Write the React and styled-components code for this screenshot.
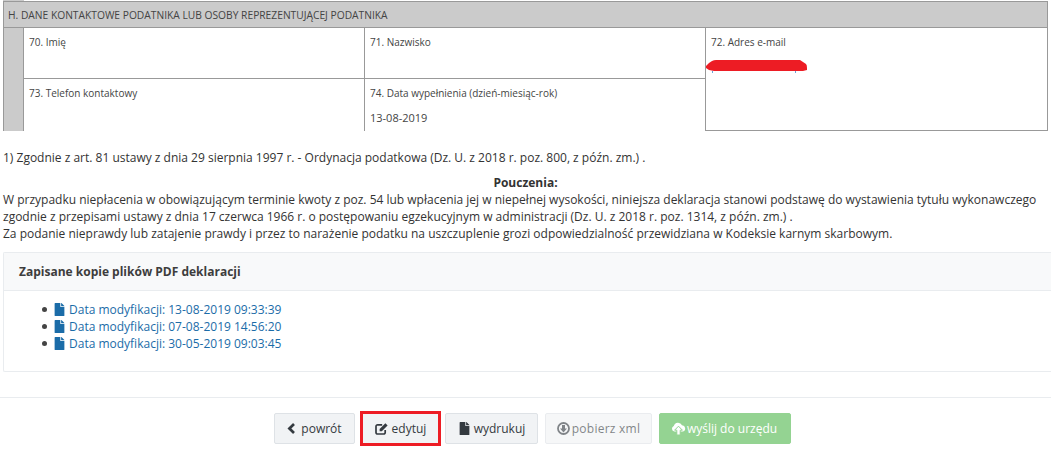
import React from 'react'
import styled, { createGlobalStyle } from 'styled-components'
import { FaFile } from 'react-icons/fa'

const Global = createGlobalStyle`
  html, body { margin: 0; padding: 0; background: #fff; overflow: hidden; }
  body {
    font-family: "Open Sans", "Liberation Sans", sans-serif;
    font-size: 12px;
    line-height: 17px;
    color: #333;
  }
`
const Page = styled.div`
  width: 1051px;
  height: 452px;
  overflow: hidden;
`
const Stub = styled.div`
  margin-left: 3px;
  width: 21px;
  height: 1px;
  background: #cbcbcb;
`
const Form = styled.div`
  margin-left: 3px;
  width: 1045px;
  height: 130px;
  box-sizing: border-box;
  border-top: 1px solid #999;
  border-left: 1px solid #999;
  border-right: 1px solid #999;
  background: #cbcbcb;
  display: flex;
  flex-direction: column;
`
const SectionTitle = styled.div`
  height: 25px;
  padding-left: 4px;
  font-size: 10.26px;
  line-height: 26px;
  color: #444;
  border-bottom: 1px solid #999;
`
const CellGrid = styled.div`
  flex: 1;
  margin-left: 19px;
  display: grid;
  grid-template-columns: 341px 341px 1fr;
  grid-template-rows: 50px 1fr;
  background: #fff;
`
const Cell = styled.div`
  position: relative;
  padding: 7px 5px 0 5px;
  box-sizing: border-box;
  border-left: 1px solid #999;
  border-top: ${p => (p.$second ? '1px solid #999' : 'none')};
  border-bottom: ${p => (p.$closed ? '1px solid #999' : 'none')};
  font-size: 10px;
  line-height: 15px;
  color: #444;
  grid-column: ${p => p.$col || 'auto'};
  grid-row: ${p => p.$row || 'auto'};
`
const CellValue = styled.div`
  margin-top: 9px;
  font-size: 11px;
  color: #444;
`
const Scribble = styled.svg`
  position: absolute;
  left: 0;
  top: 32px;
`
const Note = styled.p`
  margin: 18px 0 0 3px;
`
const Lesson = styled.section`
  margin: 8px 0 0 3px;
`
const LessonTitle = styled.div`
  text-align: center;
  font-weight: 700;
  width: 1045px;
`
const Panel = styled.section`
  margin: 10px 0 0 3px;
  height: 120px;
  box-sizing: border-box;
  border: 1px solid #e9ecef;
  border-right: none;
  border-radius: 2px 0 0 2px;
`
const PanelHead = styled.h3`
  margin: 0;
  height: 38px;
  box-sizing: border-box;
  padding-left: 15px;
  background: #f8f9fa;
  border-bottom: 1px solid #e9ecef;
  font-size: 12px;
  font-weight: 700;
  line-height: 37px;
  color: #3d3d3d;
`
const FileList = styled.ul`
  margin: 10px 0 0;
  padding: 0 0 0 38px;
  list-style: none;
`
const FileLink = styled.li`
  display: flex;
  align-items: center;
  &::before {
    content: '';
    width: 5px;
    height: 5px;
    border-radius: 50%;
    background: #444;
    margin-right: 6px;
  }
  a {
    color: #1b6ca8;
    text-decoration: none;
    display: flex;
    align-items: center;
    gap: 3px;
  }
`
const Rule = styled.hr`
  margin: 25px 0 0;
  border: none;
  border-top: 1px solid #e9ecef;
`
const Actions = styled.div`
  margin: 15px 0 0 274px;
  display: flex;
  gap: 7px;
`
const Button = styled.button`
  height: 31px;
  width: ${p => p.$w}px;
  padding: 0 ${p => (p.$send ? '2px' : '0')} 0 0;
  box-sizing: border-box;
  border: 1px solid ${p => (p.$send ? '#94d392' : '#dee2e6')};
  border-radius: ${p => (p.$marked ? '0' : '2px')};
  background: ${p => (p.$send ? '#94d392' : '#f1f3f5')};
  color: ${p => (p.$send ? '#fff' : '#343a40')};
  font-family: inherit;
  font-size: 12px;
  display: flex;
  align-items: center;
  justify-content: center;
  gap: ${p => p.$gap ?? 4}px;
  letter-spacing: ${p => (p.$off ? '0.25px' : '0')};
  opacity: ${p => (p.$off ? 0.62 : 1)};
  outline: ${p => (p.$marked ? '3px solid #ed1c24' : 'none')};
  outline-offset: -1px;
  margin-right: ${p => (p.$marked ? '-1px' : '0')};
`
const files = ['13-08-2019 09:33:39', '07-08-2019 14:56:20', '30-05-2019 09:03:45']

const ChevronIcon = () => (
  <svg width="9" height="11" viewBox="0 0 9 11">
    <path d="M7 1 L2.4 5.5 L7 10" fill="none" stroke="currentColor" strokeWidth="2.7" />
  </svg>
)
const EditIcon = () => (
  <svg width="13" height="13" viewBox="0 0 13 13">
    <path
      d="M10.2 8v2.4a1.6 1.6 0 0 1-1.6 1.6H2.6A1.6 1.6 0 0 1 1 10.4V4.4a1.6 1.6 0 0 1 1.6-1.6h4.6"
      fill="none"
      stroke="currentColor"
      strokeWidth="1.7"
    />
    <path d="M4.6 7 L4.6 9.2 L6.8 9.2 L12.6 3.4 L10.4 1.2 Z" fill="currentColor" />
  </svg>
)
const CircleDownIcon = () => (
  <svg width="13" height="13" viewBox="0 0 13 13">
    <circle cx="6.5" cy="6.5" r="5.5" fill="none" stroke="currentColor" strokeWidth="1.8" />
    <path d="M5 3h3v3.4h2L6.5 10.4 3 6.4h2z" fill="currentColor" />
  </svg>
)
const CloudIcon = () => (
  <svg width="15" height="13" viewBox="0 0 15 13">
    <path
      d="M3.4 9.6A3 3 0 0 1 2.8 3.9 4.4 4.4 0 0 1 11 3.2 3.3 3.3 0 0 1 12 9.6Z"
      fill="#fff"
    />
    <path d="M7.5 4.2 L3.6 8.2 H5.8 V13 H9.2 V8.2 H11.4 Z" fill="#fff" stroke="#94d392" strokeWidth="1" />
  </svg>
)

export default function App() {
  return (
    <Page>
      <Global />
      <Stub />
      <Form>
        <SectionTitle>H. DANE KONTAKTOWE PODATNIKA LUB OSOBY REPREZENTUJĄCEJ PODATNIKA</SectionTitle>
        <CellGrid>
          <Cell>70. Imię</Cell>
          <Cell>71. Nazwisko</Cell>
          <Cell $col="3" $row="1 / span 2" $closed>
            72. Adres e-mail
            <Scribble width="101" height="13" viewBox="0 0 101 13">
              <path d="M6 11h1v2H6zM89 11h1v2h-1z" fill="#6a9fd8" />
              <path d="M0 6 L3 3 L6 1 Q8 0 10 0 H94 L97 2 L100 4 Q101 5 101 8 V10 L97 11 H8 L3 10 L0 8Z" fill="#ed1c24" />
            </Scribble>
          </Cell>
          <Cell $second>73. Telefon kontaktowy</Cell>
          <Cell $second>
            74. Data wypełnienia (dzień-miesiąc-rok)
            <CellValue>13-08-2019</CellValue>
          </Cell>
        </CellGrid>
      </Form>
      <Note>1) Zgodnie z art. 81 ustawy z dnia 29 sierpnia 1997 r. - Ordynacja podatkowa (Dz. U. z 2018 r. poz. 800, z późn. zm.) .</Note>
      <Lesson>
        <LessonTitle>Pouczenia:</LessonTitle>
        W przypadku niepłacenia w obowiązującym terminie kwoty z poz. 54 lub wpłacenia jej w niepełnej wysokości, niniejsza deklaracja stanowi podstawę do wystawienia tytułu wykonawczego<br />
        zgodnie z przepisami ustawy z dnia 17 czerwca 1966 r. o postępowaniu egzekucyjnym w administracji (Dz. U. z 2018 r. poz. 1314, z późn. zm.) .<br />
        Za podanie nieprawdy lub zatajenie prawdy i przez to narażenie podatku na uszczuplenie grozi odpowiedzialność przewidziana w Kodeksie karnym skarbowym.
      </Lesson>
      <Panel>
        <PanelHead>Zapisane kopie plików PDF deklaracji</PanelHead>
        <FileList>
          {files.map(f => (
            <FileLink key={f}>
              <a href="#">
                <FaFile size={13} />
                Data modyfikacji: {f}
              </a>
            </FileLink>
          ))}
        </FileList>
      </Panel>
      <Rule />
      <Actions>
        <Button $w={81} $gap={5}><ChevronIcon /> powrót</Button>
        <Button $w={77} $marked><EditIcon /> edytuj</Button>
        <Button $w={93} $gap={3}><FaFile size={13} /> wydrukuj</Button>
        <Button $w={107} $off $gap={2}><CircleDownIcon /> pobierz xml</Button>
        <Button $w={132} $send $gap={1}><CloudIcon /> wyślij do urzędu</Button>
      </Actions>
    </Page>
  )
}
